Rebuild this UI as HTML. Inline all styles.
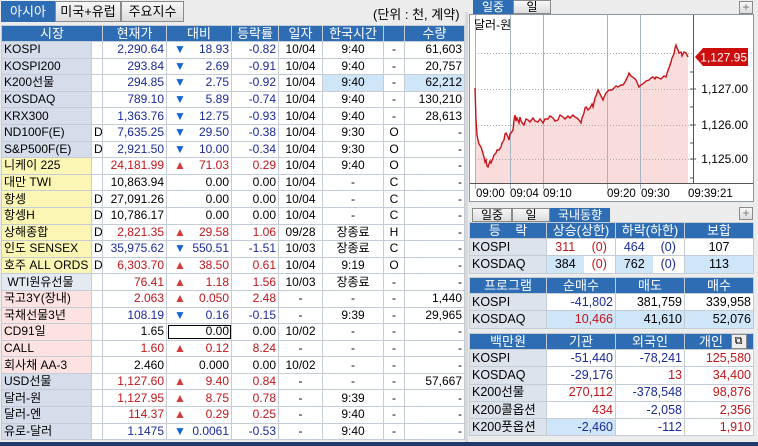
<!DOCTYPE html>
<html><head><meta charset="utf-8"><style>
*{margin:0;padding:0;box-sizing:border-box}
body{width:758px;height:446px;overflow:hidden;background:#ececec;font-family:"Liberation Sans","Noto Sans CJK KR",sans-serif;font-size:12px;color:#000;position:relative}
.a{position:absolute}
.tab{position:absolute;border:1px solid #8a8a8a;background:linear-gradient(#f8f8f8,#dcdcdc);text-align:center;color:#000}
.tab.on{background:#2e6db4;color:#fff;border-color:#2e6db4}
table{border-collapse:collapse;table-layout:fixed;position:absolute}
td{border:1px solid #c4ccd6;height:16.6px;line-height:15px;padding:0 2px;white-space:nowrap;overflow:hidden;background:#fff}
th{background:#2e6db4;color:#fff;font-weight:normal;border:1px solid #c4ccd6;height:16px;line-height:15px;font-size:13px}
.R{text-align:right}.C{text-align:center}
.r{color:#c0161b}.b{color:#1a2a9a}
.nb{background:#d5dcea}.ny{background:#fbf6b4}.nw{background:#e4eaf1}.np{background:#fde2e2}
.up,.dn{float:left;margin-left:5px;font-size:12px}
.up{color:#d43a3a}.dn{color:#1565d8}
.lb{background:#cfe5f8}
.rt td{height:17.3px;font-size:12.5px}
.rt th{height:16px}
.rl{background:#dde3ec}
</style></head><body>
<div class="tab on" style="left:1px;top:1px;width:54px;height:21px;line-height:19px;font-size:13px">아시아</div>
<div class="tab" style="left:55px;top:1px;width:66px;height:21px;line-height:19px;font-size:13px">미국+유럽</div>
<div class="tab" style="left:121px;top:1px;width:63px;height:21px;line-height:19px;font-size:13px">주요지수</div>
<div class="a" style="left:373px;top:4px;font-size:13px">(단위 : 천, 계약)</div>
<div class="a" style="left:465px;top:12px;width:3px;height:430px;background:#d8d8d8"></div>

<table style="left:1px;top:25px;width:463px">
<colgroup><col style="width:90px"><col style="width:11px"><col style="width:64px"><col style="width:65px"><col style="width:47px"><col style="width:44px"><col style="width:61px"><col style="width:21px"><col style="width:60px"></colgroup>
<tr><th colspan="2">시장</th><th>현재가</th><th>대비</th><th>등락률</th><th>일자</th><th>한국시간</th><th></th><th>수량</th></tr>
<tr><td class="nb">KOSPI</td><td></td><td class="R b">2,290.64</td><td class="R b"><span class="dn">▼</span>18.93</td><td class="R b">-0.82</td><td class="C">10/04</td><td class="C">9:40</td><td class="C">-</td><td class="R">61,603</td></tr>
<tr><td class="nb">KOSPI200</td><td></td><td class="R b">293.84</td><td class="R b"><span class="dn">▼</span>2.69</td><td class="R b">-0.91</td><td class="C">10/04</td><td class="C">9:40</td><td class="C">-</td><td class="R">20,757</td></tr>
<tr><td class="nb">K200선물</td><td></td><td class="R b">294.85</td><td class="R b"><span class="dn">▼</span>2.75</td><td class="R b">-0.92</td><td class="C">10/04</td><td class="C lb">9:40</td><td class="C">-</td><td class="R lb">62,212</td></tr>
<tr><td class="nb">KOSDAQ</td><td></td><td class="R b">789.10</td><td class="R b"><span class="dn">▼</span>5.89</td><td class="R b">-0.74</td><td class="C">10/04</td><td class="C">9:40</td><td class="C">-</td><td class="R">130,210</td></tr>
<tr><td class="nb">KRX300</td><td></td><td class="R b">1,363.76</td><td class="R b"><span class="dn">▼</span>12.75</td><td class="R b">-0.93</td><td class="C">10/04</td><td class="C">9:40</td><td class="C">-</td><td class="R">28,613</td></tr>
<tr><td class="nb">ND100F(E)</td><td>D</td><td class="R b">7,635.25</td><td class="R b"><span class="dn">▼</span>29.50</td><td class="R b">-0.38</td><td class="C">10/04</td><td class="C">9:30</td><td class="C">O</td><td class="R">-</td></tr>
<tr><td class="nb">S&amp;P500F(E)</td><td>D</td><td class="R b">2,921.50</td><td class="R b"><span class="dn">▼</span>10.00</td><td class="R b">-0.34</td><td class="C">10/04</td><td class="C">9:30</td><td class="C">O</td><td class="R">-</td></tr>
<tr><td class="ny">니케이 225</td><td></td><td class="R r">24,181.99</td><td class="R r"><span class="up">▲</span>71.03</td><td class="R r">0.29</td><td class="C">10/04</td><td class="C">9:40</td><td class="C">O</td><td class="R">-</td></tr>
<tr><td class="ny">대만 TWI</td><td></td><td class="R">10,863.94</td><td class="R">0.00</td><td class="R">0.00</td><td class="C">10/04</td><td class="C">-</td><td class="C">C</td><td class="R">-</td></tr>
<tr><td class="ny">항셍</td><td>D</td><td class="R">27,091.26</td><td class="R">0.00</td><td class="R">0.00</td><td class="C">10/04</td><td class="C">-</td><td class="C">C</td><td class="R">-</td></tr>
<tr><td class="ny">항셍H</td><td>D</td><td class="R">10,786.17</td><td class="R">0.00</td><td class="R">0.00</td><td class="C">10/04</td><td class="C">-</td><td class="C">C</td><td class="R">-</td></tr>
<tr><td class="ny">상해종합</td><td>D</td><td class="R r">2,821.35</td><td class="R r"><span class="up">▲</span>29.58</td><td class="R r">1.06</td><td class="C">09/28</td><td class="C">장종료</td><td class="C">H</td><td class="R">-</td></tr>
<tr><td class="ny">인도 SENSEX</td><td>D</td><td class="R b">35,975.62</td><td class="R b"><span class="dn">▼</span>550.51</td><td class="R b">-1.51</td><td class="C">10/03</td><td class="C">장종료</td><td class="C">C</td><td class="R">-</td></tr>
<tr><td class="ny">호주 ALL ORDS</td><td>D</td><td class="R r">6,303.70</td><td class="R r"><span class="up">▲</span>38.50</td><td class="R r">0.61</td><td class="C">10/04</td><td class="C">9:19</td><td class="C">O</td><td class="R">-</td></tr>
<tr><td class="nw">&nbsp;WTI원유선물</td><td></td><td class="R r">76.41</td><td class="R r"><span class="up">▲</span>1.18</td><td class="R r">1.56</td><td class="C">10/03</td><td class="C">장종료</td><td class="C">-</td><td class="R">-</td></tr>
<tr><td class="np">국고3Y(장내)</td><td></td><td class="R r">2.063</td><td class="R r"><span class="up">▲</span>0.050</td><td class="R r">2.48</td><td class="C">-</td><td class="C">-</td><td class="C">-</td><td class="R">1,440</td></tr>
<tr><td class="np">국채선물3년</td><td></td><td class="R b">108.19</td><td class="R b"><span class="dn">▼</span>0.16</td><td class="R b">-0.15</td><td class="C">-</td><td class="C">9:39</td><td class="C">-</td><td class="R">29,965</td></tr>
<tr><td class="np">CD91일</td><td></td><td class="R">1.65</td><td class="R" style="outline:1px solid #000;outline-offset:-2px">0.00</td><td class="R">0.00</td><td class="C">10/02</td><td class="C">-</td><td class="C">-</td><td class="R">-</td></tr>
<tr><td class="np">CALL</td><td></td><td class="R r">1.60</td><td class="R r"><span class="up">▲</span>0.12</td><td class="R r">8.24</td><td class="C">-</td><td class="C">-</td><td class="C">-</td><td class="R">-</td></tr>
<tr><td class="np">회사채 AA-3</td><td></td><td class="R">2.460</td><td class="R">0.000</td><td class="R">0.00</td><td class="C">10/02</td><td class="C">-</td><td class="C">-</td><td class="R">-</td></tr>
<tr><td class="nb">USD선물</td><td></td><td class="R r">1,127.60</td><td class="R r"><span class="up">▲</span>9.40</td><td class="R r">0.84</td><td class="C">-</td><td class="C">-</td><td class="C">-</td><td class="R">57,667</td></tr>
<tr><td class="nb">달러-원</td><td></td><td class="R r">1,127.95</td><td class="R r"><span class="up">▲</span>8.75</td><td class="R r">0.78</td><td class="C">-</td><td class="C">9:39</td><td class="C">-</td><td class="R">-</td></tr>
<tr><td class="nb">달러-엔</td><td></td><td class="R r">114.37</td><td class="R r"><span class="up">▲</span>0.29</td><td class="R r">0.25</td><td class="C">-</td><td class="C">9:40</td><td class="C">-</td><td class="R">-</td></tr>
<tr><td class="nb">유로-달러</td><td></td><td class="R b">1.1475</td><td class="R b"><span class="dn">▼</span>0.0061</td><td class="R b">-0.53</td><td class="C">-</td><td class="C">9:40</td><td class="C">-</td><td class="R">-</td></tr>
</table>

<div class="tab on" style="left:473px;top:0;width:40px;height:14px;line-height:12px">일중</div>
<div class="tab" style="left:513px;top:0;width:38px;height:14px;line-height:12px">일</div>
<div class="tab" style="left:739px;top:1px;width:14px;height:13px;line-height:11px;color:#777">+</div>

<svg class="a" style="left:466px;top:0" width="292" height="210" viewBox="0 0 292 210">
<rect x="3.5" y="14.5" width="284" height="187" fill="#fff" stroke="#8a96a8"/>
<path d="M9 183 L9 88 L10 120 L12 140 L15 147 L18 157 L20 160 L22 167 L25 163 L28 158 L30 153 L33 150 L35 147 L38 140 L40 133 L42 137 L43 140 L45 133 L47 130 L49 115 L51 118 L53 123 L55 121 L58 125 L62 120 L67 118 L72 122 L77 123 L82 119 L87 118 L92 120 L97 117 L102 116 L107 115 L111 118 L115 123 L118 113 L120 107 L124 108 L127 107 L130 96 L132 90 L135 96 L137 100 L140 93 L143 90 L148 88 L152 87 L157 85 L160 80 L163 73 L168 78 L173 87 L178 83 L183 80 L187 77 L190 77 L195 79 L200 77 L203 68 L205 62 L208 54 L210 45 L212 50 L213 53 L216 56 L220 53 L222 57 L222 183 Z" fill="#f9dcdc"/>
<g stroke="#a9b4c2" stroke-width="1">
<line x1="9.5" y1="15" x2="9.5" y2="189"/><line x1="44.5" y1="15" x2="44.5" y2="189"/><line x1="77.5" y1="15" x2="77.5" y2="189"/><line x1="141.5" y1="15" x2="141.5" y2="189"/><line x1="174.5" y1="15" x2="174.5" y2="189"/></g>
<g stroke="#aaa" stroke-dasharray="1 2"><line x1="9" y1="53.5" x2="228" y2="53.5"/><line x1="9" y1="89.5" x2="228" y2="89.5"/><line x1="9" y1="125.5" x2="228" y2="125.5"/><line x1="9" y1="159.5" x2="228" y2="159.5"/></g>
<line x1="227.5" y1="15" x2="227.5" y2="183" stroke="#555"/>
<line x1="4" y1="183.5" x2="287" y2="183.5" stroke="#555"/>
<path d="M9 88 L10 120 L11 135 L12 140 L13 144 L15 147 L16 150 L18 157 L19 162 L20 160 L21 166 L22 167 L24 161 L25 163 L27 158 L28 155 L30 153 L31 150 L33 150 L35 147 L36 143 L38 140 L39 134 L40 133 L42 137 L43 140 L44 134 L45 133 L47 130 L48 120 L49 115 L50 121 L51 118 L53 123 L54 117 L55 121 L57 124 L58 125 L60 119 L62 120 L64 122 L67 118 L69 121 L72 122 L74 119 L77 123 L79 119 L82 119 L84 116 L87 118 L89 121 L92 120 L94 115 L97 117 L99 119 L102 116 L104 118 L107 115 L109 117 L111 118 L113 120 L115 123 L116 118 L118 113 L119 108 L120 107 L122 110 L124 108 L126 104 L127 107 L129 98 L130 96 L132 90 L134 94 L135 96 L137 100 L138 97 L140 93 L142 91 L143 90 L146 90 L148 88 L150 86 L152 87 L155 85 L157 85 L159 82 L160 80 L162 76 L163 73 L165 76 L168 78 L170 80 L173 87 L175 85 L178 83 L180 81 L183 80 L185 78 L187 77 L189 79 L190 77 L193 78 L195 79 L198 76 L200 77 L202 70 L203 68 L205 62 L206 58 L208 54 L209 48 L210 45 L211 48 L212 50 L213 53 L215 52 L216 56 L218 52 L220 53 L221 55 L222 57" fill="none" stroke="#c8141a" stroke-width="1.4"/>
<g stroke="#555"><line x1="224" y1="72" x2="228" y2="72"/><line x1="224" y1="107" x2="228" y2="107"/><line x1="224" y1="143" x2="228" y2="143"/><line x1="224" y1="178" x2="228" y2="178"/><line x1="224" y1="89" x2="230" y2="89"/><line x1="224" y1="125" x2="230" y2="125"/><line x1="224" y1="159" x2="230" y2="159"/></g>
<path d="M229 57 L237 48 L282 48 L282 66 L237 66 Z" fill="#cc0d0d"/>
<text x="281" y="61.5" fill="#fff" font-size="12" text-anchor="end" font-family="Liberation Sans">1,127.95</text>
<g font-size="12" font-family="Liberation Sans" text-anchor="end" fill="#000"><text x="282" y="93">1,127.00</text><text x="282" y="129">1,126.00</text><text x="282" y="163">1,125.00</text></g>
<text x="8" y="29" font-size="12" font-family="Liberation Sans,Noto Sans CJK KR">달러-원</text>
<g font-size="11.5" font-family="Liberation Sans"><text x="10" y="197">09:00</text><text x="44" y="197">09:04</text><text x="77" y="197">09:10</text><text x="141" y="197">09:20</text><text x="175" y="197">09:30</text><text x="222" y="197">09:39:21</text></g>
</svg>

<div class="tab" style="left:472px;top:208px;width:40px;height:14px;line-height:12px">일중</div>
<div class="tab" style="left:512px;top:208px;width:38px;height:14px;line-height:12px">일</div>
<div class="tab on" style="left:550px;top:208px;width:60px;height:14px;line-height:12px">국내동향</div>
<div class="tab" style="left:739px;top:207px;width:14px;height:13px;line-height:11px;color:#777">+</div>

<table class="rt" style="left:469px;top:222px;width:284px">
<colgroup><col style="width:77px"><col style="width:37px"><col style="width:32px"><col style="width:37px"><col style="width:32px"><col style="width:69px"></colgroup>
<tr><th>등&nbsp;&nbsp;&nbsp;&nbsp;락</th><th colspan="2">상승(상한)</th><th colspan="2">하락(하한)</th><th>보합</th></tr>
<tr><td class="rl">KOSPI</td><td class="C r" style="border-right:0">311</td><td class="C r" style="border-left:0">(0)</td><td class="C b" style="border-right:0">464</td><td class="C b" style="border-left:0">(0)</td><td class="C">107</td></tr>
<tr><td class="rl">KOSDAQ</td><td class="C lb" style="border-right:0">384</td><td class="C r" style="border-left:0">(0)</td><td class="C lb" style="border-right:0">762</td><td class="C b" style="border-left:0">(0)</td><td class="C lb">113</td></tr>
</table>

<table class="rt" style="left:469px;top:277px;width:284px">
<colgroup><col style="width:77px"><col style="width:69px"><col style="width:69px"><col style="width:69px"></colgroup>
<tr><th>프로그램</th><th>순매수</th><th>매도</th><th>매수</th></tr>
<tr><td class="rl">KOSPI</td><td class="R b">-41,802</td><td class="R">381,759</td><td class="R">339,958</td></tr>
<tr><td class="rl">KOSDAQ</td><td class="R r lb">10,466</td><td class="R lb">41,610</td><td class="R lb">52,076</td></tr>
</table>

<table class="rt" style="left:469px;top:333px;width:284px">
<colgroup><col style="width:77px"><col style="width:69px"><col style="width:69px"><col style="width:69px"></colgroup>
<tr><th>백만원</th><th>기관</th><th>외국인</th><th style="text-align:left;padding-left:14px">개인 <span style="display:inline-block;background:#eee;color:#000;border:1px solid #888;width:16px;height:15px;line-height:13px;text-align:center;font-size:11px;vertical-align:top;margin-left:4px">⧉</span></th></tr>
<tr><td class="rl">KOSPI</td><td class="R b">-51,440</td><td class="R b">-78,241</td><td class="R r">125,580</td></tr>
<tr><td class="rl">KOSDAQ</td><td class="R b">-29,176</td><td class="R r">13</td><td class="R r">34,400</td></tr>
<tr><td class="rl">K200선물</td><td class="R r">270,112</td><td class="R b">-378,548</td><td class="R r">98,876</td></tr>
<tr><td class="rl">K200콜옵션</td><td class="R r">434</td><td class="R b">-2,058</td><td class="R r">2,356</td></tr>
<tr><td class="rl">K200풋옵션</td><td class="R b lb">-2,460</td><td class="R b">-112</td><td class="R r">1,910</td></tr>
</table>

<div class="a" style="left:0;top:442px;width:758px;height:4px;background:#1f3a68"></div>
</body></html>
